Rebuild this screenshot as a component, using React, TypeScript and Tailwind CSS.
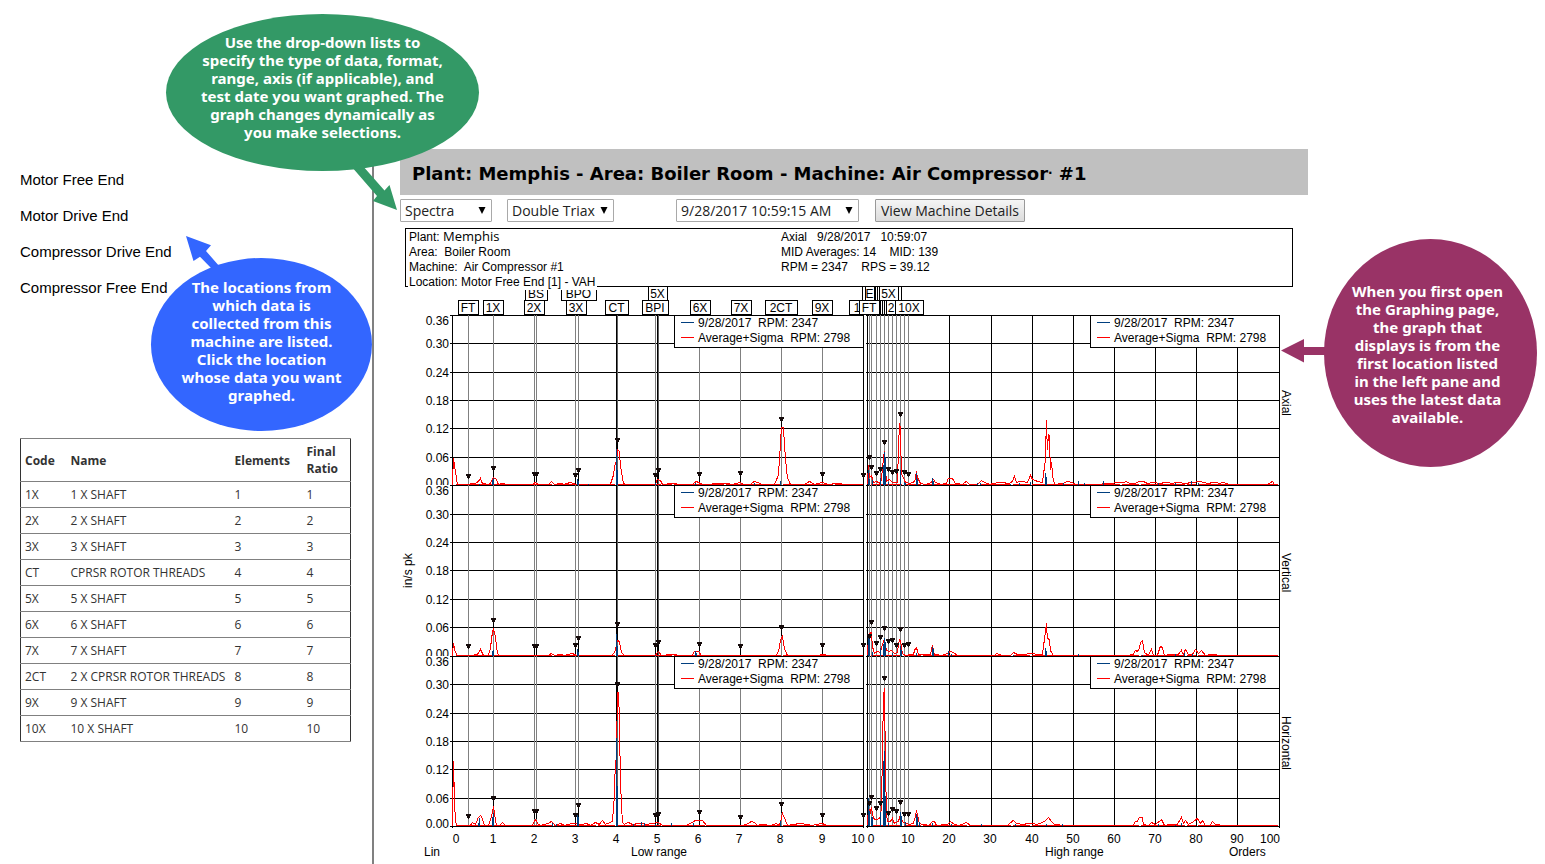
import React from 'react';

type Pt = [number, number];
type Marker = [number, number];
type Tag = [text: string, left: number, right: number];

interface Trace {
  average: Pt[];
  current: Pt[];
  markers: Marker[];
}

interface Panel {
  name: string;
  top: number;
  base: number;
  nameY: number;
  low: Trace;
  high: Trace;
}

const LOW_X = 52;
const HIGH_X = 467;
const PLOT_W = 411;
const RED = '#ff0000';
const BLUE = '#003f7f';

const panels: Panel[] = [
  {
    name: 'Axial',
    top: 28,
    base: 198,
    nameY: 103,
    low: {
      average: [[0, 0], [1, 27], [3, 14], [5, 1], [16, 1], [20, 2], [23, 2], [26, 4], [28, 7], [30, 2], [36, 1], [38, 2], [41, 8], [44, 6], [46, 1], [50, 2], [54, 1], [80, 1], [83, 3], [86, 1], [96, 1], [99, 4], [102, 1], [108, 2], [112, 1], [118, 3], [124, 1], [158, 1], [161, 10], [163, 23], [164, 20], [165, 36], [167, 34], [168, 20], [171, 2], [174, 1], [203, 1], [205, 6], [208, 5], [210, 1], [222, 2], [226, 1], [240, 1], [244, 4], [248, 2], [250, 1], [274, 2], [280, 1], [288, 3], [291, 1], [298, 1], [302, 4], [310, 1], [322, 1], [326, 10], [328, 40], [329, 58], [331, 58], [333, 27], [335, 8], [338, 1], [352, 1], [357, 4], [362, 1], [370, 3], [376, 1], [386, 2], [392, 1], [411, 1]],
      current: [[27, 1], [40, 5], [41, 7], [125, 6], [126, 4], [136, 1], [164, 36], [165, 15], [203, 2], [243, 2], [302, 2], [328, 4]],
      markers: [[16, 189], [41, 181], [82, 187], [84, 187], [123, 188], [126, 183], [165, 153], [203, 188], [206, 183], [247, 187], [288, 186], [329, 132], [370, 187], [411, 188]],
    },
    high: {
      average: [[0, 1], [1, 20], [2, 8], [4, 10], [6, 3], [9, 4], [13, 2], [14, 6], [16, 26], [17, 34], [19, 4], [22, 6], [25, 3], [30, 3], [32, 62], [33, 58], [34, 12], [36, 8], [38, 3], [42, 2], [46, 3], [48, 6], [49, 14], [50, 8], [53, 2], [58, 1], [64, 3], [66, 6], [68, 3], [74, 1], [79, 2], [81, 7], [85, 7], [88, 2], [95, 1], [99, 4], [102, 1], [110, 1], [114, 5], [117, 3], [122, 1], [132, 3], [142, 2], [145, 4], [147, 9], [149, 3], [153, 4], [160, 3], [163, 10], [165, 6], [170, 4], [175, 3], [178, 25], [179, 65], [180, 35], [181, 51], [182, 50], [183, 15], [184, 23], [186, 4], [188, 1], [196, 2], [200, 4], [205, 3], [208, 1], [232, 1], [240, 2], [256, 3], [259, 4], [262, 2], [268, 2], [272, 4], [276, 4], [280, 2], [286, 3], [292, 2], [300, 3], [304, 2], [310, 3], [318, 2], [326, 3], [332, 4], [340, 2], [348, 3], [352, 2], [356, 3], [362, 1], [400, 1], [405, 4], [407, 1], [411, 1]],
      current: [[1, 15], [2, 6], [5, 5], [13, 7], [16, 20], [17, 33], [18, 28], [21, 3], [33, 15], [37, 3], [38, 2], [49, 12], [50, 6], [65, 7], [66, 4], [110, 2], [113, 2], [143, 1], [152, 2], [163, 3], [178, 12], [179, 8], [196, 2], [211, 4], [217, 2], [236, 4], [291, 2], [308, 2], [324, 4], [331, 2]],
      markers: [[2, 170], [4, 180], [9, 186], [13, 182], [17, 155], [21, 182], [25, 185], [29, 184], [33, 127], [37, 185], [41, 187]],
    },
  },
  {
    name: 'Vertical',
    top: 198,
    base: 369,
    nameY: 266,
    low: {
      average: [[0, 0], [1, 13], [3, 4], [5, 1], [20, 1], [25, 2], [28, 7], [31, 1], [36, 1], [38, 8], [40, 24], [41, 27], [43, 20], [45, 3], [47, 1], [96, 1], [99, 3], [102, 1], [108, 2], [112, 1], [120, 3], [124, 1], [160, 1], [163, 6], [165, 16], [167, 15], [169, 4], [172, 1], [203, 1], [206, 5], [209, 1], [222, 2], [226, 1], [240, 1], [242, 5], [246, 5], [249, 1], [324, 1], [327, 8], [328, 16], [330, 20], [332, 8], [335, 1], [366, 1], [371, 2], [376, 1], [411, 1]],
      current: [[40, 5], [41, 6], [125, 7], [126, 4], [164, 22], [165, 10], [203, 1], [243, 5], [244, 3]],
      markers: [[16, 359], [41, 333], [82, 359], [84, 359], [123, 358], [126, 351], [165, 337], [203, 358], [206, 355], [247, 357], [288, 359], [329, 340], [370, 358], [411, 358]],
    },
    high: {
      average: [[0, 1], [1, 18], [3, 24], [4, 24], [5, 10], [7, 3], [10, 5], [13, 4], [15, 12], [17, 17], [19, 6], [22, 5], [24, 6], [27, 3], [30, 4], [32, 17], [33, 16], [35, 3], [38, 1], [46, 2], [48, 8], [49, 9], [51, 2], [56, 2], [63, 2], [65, 11], [67, 2], [75, 1], [80, 3], [83, 5], [86, 4], [90, 1], [127, 1], [129, 3], [135, 1], [143, 1], [146, 4], [150, 2], [158, 2], [163, 3], [170, 2], [175, 2], [178, 24], [179, 33], [180, 18], [182, 17], [183, 6], [184, 4], [186, 1], [260, 1], [266, 2], [268, 6], [270, 5], [272, 8], [273, 14], [275, 16], [277, 4], [281, 1], [284, 7], [286, 1], [290, 1], [293, 10], [295, 9], [297, 1], [304, 2], [311, 2], [314, 6], [316, 2], [318, 7], [321, 2], [325, 2], [328, 7], [331, 3], [334, 6], [338, 1], [346, 2], [352, 1], [411, 1]],
      current: [[1, 18], [2, 18], [5, 4], [13, 8], [16, 12], [17, 18], [18, 14], [25, 3], [33, 10], [34, 6], [49, 3], [65, 9], [66, 7], [81, 5], [84, 2], [146, 1], [178, 8], [179, 5], [211, 2], [275, 1], [308, 2], [317, 3], [325, 2]],
      markers: [[2, 349], [4, 335], [9, 356], [13, 350], [17, 341], [21, 354], [25, 353], [29, 358], [33, 342], [37, 358], [41, 357]],
    },
  },
  {
    name: 'Horizontal',
    top: 369,
    base: 539,
    nameY: 429,
    low: {
      average: [[0, 0], [1, 65], [2, 32], [3, 4], [5, 1], [18, 1], [20, 4], [23, 2], [26, 9], [28, 11], [30, 8], [32, 1], [36, 1], [38, 6], [40, 14], [41, 20], [43, 7], [44, 1], [47, 1], [50, 4], [53, 1], [80, 1], [83, 7], [86, 2], [88, 1], [96, 3], [99, 5], [103, 1], [108, 3], [112, 1], [120, 3], [130, 2], [134, 3], [138, 1], [143, 4], [147, 2], [150, 6], [153, 2], [158, 4], [160, 5], [162, 30], [163, 66], [164, 60], [165, 134], [166, 134], [167, 110], [168, 45], [170, 4], [172, 2], [176, 4], [180, 2], [188, 3], [195, 2], [200, 3], [206, 4], [210, 1], [234, 1], [240, 4], [243, 6], [250, 6], [254, 1], [290, 1], [296, 3], [299, 5], [302, 4], [305, 1], [310, 2], [318, 1], [324, 3], [327, 1], [329, 8], [330, 13], [332, 9], [335, 1], [348, 3], [354, 2], [360, 1], [370, 3], [374, 1], [411, 1]],
      current: [[26, 3], [27, 8], [40, 9], [41, 13], [100, 3], [104, 2], [125, 12], [126, 9], [164, 88], [165, 40], [181, 2], [189, 4], [192, 3], [203, 2], [219, 3], [241, 3], [328, 5]],
      markers: [[16, 529], [41, 511], [82, 524], [84, 524], [123, 528], [126, 518], [165, 397], [203, 528], [206, 527], [247, 525], [288, 530], [329, 517], [370, 528], [411, 528]],
    },
    high: {
      average: [[0, 1], [1, 18], [3, 14], [4, 19], [6, 8], [8, 7], [10, 7], [13, 9], [14, 20], [15, 69], [16, 128], [17, 138], [18, 69], [19, 14], [20, 5], [23, 5], [25, 8], [27, 3], [31, 5], [33, 11], [35, 5], [38, 3], [42, 2], [46, 3], [48, 10], [49, 16], [50, 12], [52, 3], [55, 2], [62, 1], [65, 5], [67, 5], [69, 1], [80, 2], [83, 5], [87, 2], [92, 1], [99, 4], [103, 1], [140, 1], [146, 6], [149, 3], [155, 2], [163, 3], [170, 2], [177, 5], [179, 7], [181, 9], [184, 5], [187, 2], [196, 1], [266, 1], [268, 5], [270, 5], [272, 9], [275, 9], [276, 2], [281, 1], [284, 4], [288, 2], [292, 5], [294, 7], [297, 1], [304, 2], [310, 2], [314, 9], [316, 3], [318, 6], [321, 2], [325, 4], [330, 8], [333, 3], [335, 6], [338, 1], [343, 1], [345, 5], [348, 2], [356, 1], [411, 1]],
      current: [[1, 28], [2, 15], [4, 9], [5, 9], [13, 14], [16, 65], [17, 75], [18, 30], [21, 3], [33, 14], [34, 10], [38, 4], [49, 12], [50, 9], [52, 4], [65, 3], [84, 2], [114, 2], [148, 2], [179, 2], [195, 2], [291, 2], [308, 1], [314, 3]],
      markers: [[2, 516], [4, 510], [9, 521], [13, 516], [17, 391], [21, 526], [25, 522], [29, 524], [33, 515], [37, 527], [41, 527]],
    },
  },
];

const gridYs = [
  [28, 56, 85, 113, 141, 170, 198],
  [198, 227, 255, 283, 312, 340, 369],
  [369, 397, 426, 454, 482, 511, 539],
];
const yLabels = ['0.36', '0.30', '0.24', '0.18', '0.12', '0.06', '0.00'];
const lowGray = [68, 93, 134, 136, 175, 178, 255, 299, 340, 381, 422];
const highGray = [469, 471, 476, 480, 484, 488, 492, 496, 500, 504, 508];
const highGrid = [549, 591, 632, 673, 714, 755, 796, 837];

const lowTicks: [string, number][] = [['0', 56], ['1', 93], ['2', 134], ['3', 175], ['4', 216], ['5', 257], ['6', 298], ['7', 339], ['8', 380], ['9', 422], ['10', 458]];
const highTicks: [string, number][] = [['0', 471], ['10', 508], ['20', 549], ['30', 590], ['40', 632], ['50', 673], ['60', 714], ['70', 755], ['80', 796], ['90', 837], ['100', 870]];

const upperTags: Tag[] = [['BS', 125, 147], ['BPO', 161, 196], ['5X', 248, 267], ['', 462, 498], ['', 465, 501], ['E', 465, 474], ['', 475, 477], ['5X', 479, 498]];
const lowerTags: Tag[] = [['FT', 58, 78], ['1X', 83, 103], ['2X', 124, 144], ['3X', 166, 186], ['CT', 205, 228], ['BPI', 242, 268], ['6X', 290, 310], ['7X', 331, 351], ['2CT', 365, 397], ['9X', 412, 432], ['1', 449, 465], ['FT', 459, 479], ['', 480, 490], ['', 482, 492], ['', 484, 494], ['', 486, 496], ['2', 486, 496], ['10X', 495, 523]];

function Tags({ tags, y }: { tags: Tag[]; y: number }) {
  return (
    <>
      {tags.map(([text, l, r], i) => (
        <g key={i}>
          <rect x={l + 0.5} y={y + 0.5} width={r - l} height={14} fill="#fff" stroke="#000" shapeRendering="crispEdges" />
          {text && <text x={(l + r) / 2} y={y + 12} textAnchor="middle">{text}</text>}
        </g>
      ))}
    </>
  );
}

function Spectrum({ trace, x, base }: { trace: Trace; x: number; base: number }) {
  const level = (px: number) => {
    let h = 1;
    trace.average.forEach(([ax, ah]) => {
      if (Math.abs(ax - px) <= 1) h = Math.max(h, ah);
    });
    return base - h;
  };
  const stems = trace.markers.filter(([mx]) => x === LOW_X && mx !== 16);
  const floor: Pt[] = [];
  for (let sx = 4, i = 0; sx < PLOT_W; i += 1) {
    const w = Math.min([31, 17, 44, 9][i % 4], PLOT_W - sx);
    floor.push([sx, w]);
    sx += w + 2;
  }
  return (
    <g shapeRendering="crispEdges">
      {stems.map(([mx, my], i) => (
        <rect key={i} x={x + mx} y={my} width={1} height={Math.max(0, level(mx) - my)} fill="#000" />
      ))}
      {floor.map(([sx, w]) => (
        <rect key={sx} x={x + sx} y={base - 1} width={w} height={1} fill={RED} />
      ))}
      <polyline
        fill="none"
        stroke={RED}
        points={trace.average.map(([px, h]) => `${x + px + 0.4},${base - h + 0.4}`).join(' ')}
      />
      {trace.current.map(([px, h], i) => (
        <rect key={i} x={x + px} y={base - h} width={1} height={h} fill={BLUE} />
      ))}
      {trace.markers.map(([mx, my], i) => (
        <path
          key={i}
          fill="#140a0a"
          d={`M${x + mx - 2} ${my - 2}h5v2h-1v2h-1v1h-1v-1h-1v-2h-1z`}
        />
      ))}
    </g>
  );
}

function Legend({ x, right, y }: { x: number; right: number; y: number }) {
  return (
    <g>
      <rect x={x + 0.5} y={y + 0.5} width={right - x} height={32} fill="#fff" stroke="#000" shapeRendering="crispEdges" />
      <rect x={x + 7} y={y + 7} width={13} height={1} fill={BLUE} />
      <rect x={x + 7} y={y + 22} width={13} height={1} fill={RED} />
      <text x={x + 24} y={y + 12} className="whitespace-pre">{'9/28/2017  RPM: 2347'}</text>
      <text x={x + 24} y={y + 27} className="whitespace-pre">{'Average+Sigma  RPM: 2798'}</text>
    </g>
  );
}

function Chart() {
  return (
    <svg
      viewBox="0 0 908 577"
      role="img"
      aria-label="Low range and high range spectra"
      className="block h-auto w-full font-['Liberation_Sans',Arial,sans-serif] text-[12px]"
    >
      <Tags tags={upperTags} y={-1} />
      <Tags tags={lowerTags} y={13} />
      <g shapeRendering="crispEdges">
        {gridYs.flat().map((y, i) => (
          <React.Fragment key={i}>
            <rect x={50} y={y} width={413} height={1} />
            <rect x={466} y={y} width={413} height={1} />
          </React.Fragment>
        ))}
        {lowGray.map((x) => <rect key={x} x={x} y={28} width={1} height={511} fill="#808080" />)}
        <rect x={216} y={28} width={1} height={511} />
        <rect x={217} y={28} width={1} height={511} fill="#606060" />
        <rect x={257} y={28} width={1} height={511} />
        <rect x={258} y={28} width={1} height={511} fill="#606060" />
        {highGray.map((x) => <rect key={x} x={x} y={28} width={1} height={511} fill="#808080" />)}
        {highGrid.map((x) => <rect key={x} x={x} y={28} width={1} height={511} />)}
        <rect x={LOW_X} y={28} width={1} height={513} />
        <rect x={LOW_X + PLOT_W} y={28} width={1} height={513} />
        <rect x={HIGH_X} y={28} width={1} height={513} />
        <rect x={879} y={28} width={1} height={513} />
      </g>
      {panels.map((p, pi) => (
        <g key={p.name}>
          <Legend x={274} right={463} y={p.top} />
          <Legend x={690} right={879} y={p.top} />
          <Spectrum trace={p.low} x={LOW_X} base={p.base} />
          <Spectrum trace={p.high} x={HIGH_X} base={p.base} />
          {yLabels.map((label, i) => {
            const y = gridYs[pi][i] + (i === 0 ? 10 : i === 6 ? 2 : 5);
            return (
              <g key={label}>
                {i === 0 && <rect x={24} y={gridYs[pi][0]} width={26} height={12} fill="#fff" />}
                <text x={49} y={y} textAnchor="end">{label}</text>
              </g>
            );
          })}
          <text transform={`translate(882 ${p.nameY}) rotate(90)`}>{p.name}</text>
        </g>
      ))}
      <text transform="translate(12 301) rotate(-90)">in/s pk</text>
      {[...lowTicks, ...highTicks].map(([t, x], i) => (
        <text key={i} x={x} y={556} textAnchor="middle">{t}</text>
      ))}
      <text x={24} y={569}>Lin</text>
      <text x={231} y={569}>Low range</text>
      <text x={645} y={569}>High range</text>
      <text x={829} y={569}>Orders</text>
    </svg>
  );
}

function Picker({ label, value, className }: { label: string; value: string; className: string }) {
  return (
    <div className={`relative h-[23px] ${className}`}>
      <select
        aria-label={label}
        defaultValue={value}
        className="block h-full w-full appearance-none rounded-[1px] border border-[#a9a9a9] bg-white pl-1 text-[14px] text-[#222]"
      >
        <option>{value}</option>
      </select>
      <svg viewBox="0 0 8 7" className="pointer-events-none absolute top-2 right-[6px] h-[7px] w-2" aria-hidden="true">
        <path d="M0.5 0h7L4 7z" />
      </svg>
    </div>
  );
}

function Callout({ lines, className }: { lines: string[]; className: string }) {
  return (
    <div
      className={`absolute flex flex-col items-center justify-center rounded-[50%] font-['Noto_Sans',Tahoma,sans-serif] text-[15px] leading-[18px] font-bold whitespace-nowrap text-white ${className}`}
    >
      {lines.map((l) => <span key={l}>{l}</span>)}
    </div>
  );
}

const locations = ['Motor Free End', 'Motor Drive End', 'Compressor Drive End', 'Compressor Free End'];
const rows: [string, string, string][] = [
  ['1X', '1 X SHAFT', '1'],
  ['2X', '2 X SHAFT', '2'],
  ['3X', '3 X SHAFT', '3'],
  ['CT', 'CPRSR ROTOR THREADS', '4'],
  ['5X', '5 X SHAFT', '5'],
  ['6X', '6 X SHAFT', '6'],
  ['7X', '7 X SHAFT', '7'],
  ['2CT', '2 X CPRSR ROTOR THREADS', '8'],
  ['9X', '9 X SHAFT', '9'],
  ['10X', '10 X SHAFT', '10'],
];

export default function App() {
  return (
    <div className="relative flex min-h-screen bg-white pt-[149px] font-['Open_Sans',sans-serif] text-black">
      <aside className="w-[374px] shrink-0 border-r-2 border-[#808080] pt-[13px] pl-5">
        <nav aria-label="Locations" className="font-['Liberation_Sans',Arial,sans-serif] text-[15px] leading-9">
          {locations.map((l) => (
            <a key={l} href="#graph" className="block">{l}</a>
          ))}
        </nav>
        <table className="mt-[132px] w-[330px] table-fixed border-collapse border-x border-x-[#333] text-left text-[12px] leading-[17px] text-[#333]">
          <colgroup>
            <col className="w-[45px]" />
            <col className="w-[164px]" />
            <col className="w-[72px]" />
            <col className="w-[49px]" />
          </colgroup>
          <thead>
            <tr className="h-[43px] border-y border-[#808080]">
              <th className="pl-1 font-bold">Code</th>
              <th className="pl-[5px] font-bold">Name</th>
              <th className="pl-[5px] font-bold">Elements</th>
              <th className="pr-2 pl-[5px] font-bold">Final Ratio</th>
            </tr>
          </thead>
          <tbody>
            {rows.map(([code, name, n]) => (
              <tr key={code} className="h-[26px] border-b border-[#808080]">
                <td className="pl-1">{code}</td>
                <td className="pl-[5px] whitespace-nowrap">{name}</td>
                <td className="pl-[5px]">{n}</td>
                <td className="pl-[5px]">{n}</td>
              </tr>
            ))}
          </tbody>
        </table>
      </aside>

      <main id="graph" className="min-w-0 flex-1 pr-[237px] pl-[26px]">
        <h1 className="flex h-[46px] items-center bg-[#c0c0c0] pt-0.5 pl-3 font-['DejaVu_Sans',Verdana,sans-serif] text-[18px] font-bold whitespace-pre">
          Plant: Memphis - Area: Boiler Room - Machine: Air Compressor<span className="text-[12px]">·</span> #1
        </h1>

        <div className="mt-1 flex">
          <Picker label="Data type" value="Spectra" className="w-[92px]" />
          <Picker label="Format" value="Double Triax" className="ml-[15px] w-[107px]" />
          <Picker label="Test date" value="9/28/2017 10:59:15 AM" className="ml-[62px] w-[183px]" />
          <button
            type="button"
            className="ml-4 h-[23px] w-[150px] rounded-[1px] border border-[#999] bg-linear-to-b from-[#f5f5f5] to-[#dcdcdc] text-[14px] leading-[20px] whitespace-nowrap text-[#222]"
          >
            View Machine Details
          </button>
        </div>

        <section className="relative z-10 mt-[6px] mr-[15px] ml-[5px] flex h-[59px] border border-black font-['Liberation_Sans',Arial,sans-serif] text-[12px] leading-[15px] whitespace-pre">
          <div className="w-[372px] pl-[2px]">
            <p className="px-px">Plant: <span className="font-['Open_Sans',sans-serif] text-[13px] leading-[14px]">Memphis</span></p>
            <p className="px-px">{'Area:  Boiler Room'}</p>
            <p className="px-px">{'Machine:  Air Compressor #1'}</p>
            <p className="w-fit bg-white px-px">Location: Motor Free End [1] - VAH</p>
          </div>
          <div className="pt-px pl-[3px]">
            <p>{'Axial   9/28/2017   10:59:07'}</p>
            <p>{'MID Averages: 14    MID: 139'}</p>
            <p>{'RPM = 2347    RPS = 39.12'}</p>
          </div>
        </section>

        <Chart />
      </main>

      <svg viewBox="0 0 48 46" className="absolute top-[165px] left-[350px] h-[46px] w-12 fill-[#339966]" aria-hidden="true">
        <path d="M1 1L27 31L23 36L47 45L39.500 20L34.500 25.500L12 0z" />
      </svg>
      <svg viewBox="0 0 36 34" className="absolute top-[236px] left-[186px] h-[34px] w-9 fill-[#3366ff]" aria-hidden="true">
        <path d="M0 0L25 9.300L20 15L34 31L26 33L14 20.700L7.500 25z" />
      </svg>
      <svg viewBox="0 0 48 24" className="absolute top-[339px] left-[1281px] h-6 w-12 fill-[#993366]" aria-hidden="true">
        <path d="M0 11.500L23 0V8H48V16H23V23.500z" />
      </svg>

      <Callout
        className="top-[14px] left-[166px] h-[157px] w-[313px] bg-[#339966] pb-3"
        lines={['Use the drop-down lists to', 'specify the type of data, format,', 'range, axis (if applicable), and', 'test date you want graphed. The', 'graph changes dynamically as', 'you make selections.']}
      />
      <Callout
        className="top-[258px] left-[151px] h-[173px] w-[221px] bg-[#3366ff] pb-2"
        lines={['The locations from', 'which data is', 'collected from this', 'machine are listed.', 'Click the location', 'whose data you want', 'graphed.']}
      />
      <Callout
        className="top-[239px] left-[1324px] h-[228px] w-[213px] bg-[#993366] pt-0.5 pr-[6px]"
        lines={['When you first open', 'the Graphing page,', 'the graph that', 'displays is from the', 'first location listed', 'in the left pane and', 'uses the latest data', 'available.']}
      />
    </div>
  );
}
